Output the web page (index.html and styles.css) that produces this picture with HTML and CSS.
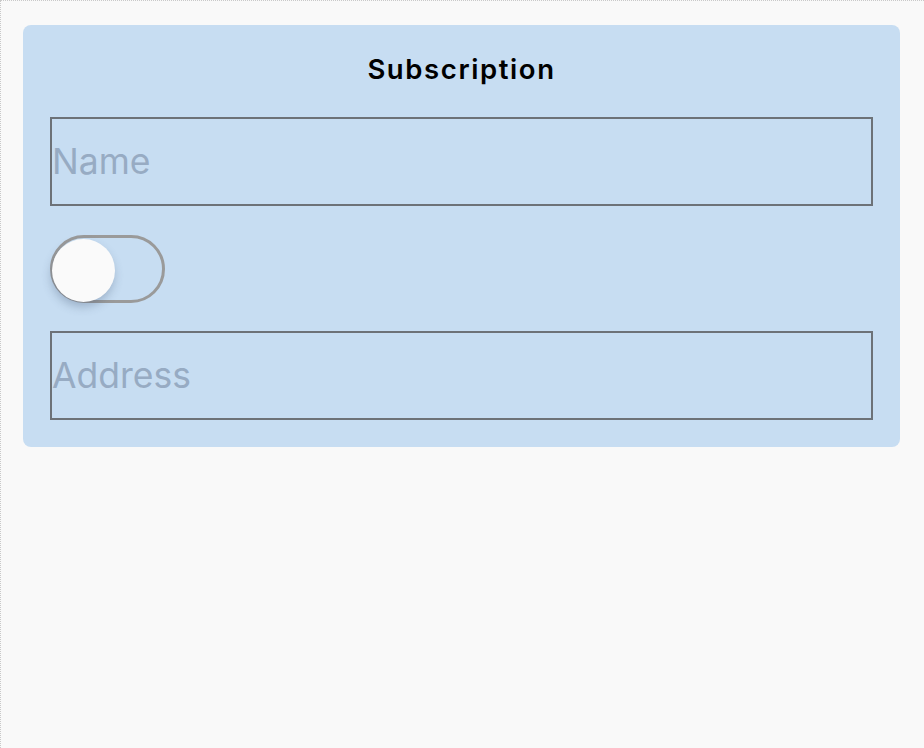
FILE: index.html
```html
<!DOCTYPE html>
<html lang="en">
<head>
    <meta charset="UTF-8">
    <meta name="viewport" content="width=device-width, initial-scale=1.0">
    <title>Subscription</title>
    <link rel="stylesheet" href="styles.css">
</head>
<body>
    <div class="page">
        <form class="card" id="subscriptionForm">
            <h2 class="card-title">Subscription</h2>
            <input class="field" type="text" id="name" placeholder="Name">
            <label class="switch">
                <input type="checkbox" id="subscribed">
                <span class="knob"></span>
            </label>
            <input class="field" type="text" id="address" placeholder="Address">
        </form>
    </div>
</body>
</html>
```

FILE: styles.css
```css
body {
    margin: 0;
    font-family: Inter, "Liberation Sans", Arial, sans-serif;
    background: #f9f9f9;
    min-height: 100vh;
    box-sizing: border-box;
    border-top: 1px dotted #c9c9c9;
    border-left: 1px dotted #c9c9c9;
}

.page {
    padding: 24px 24px 0 22px;
}

.card {
    background: #c7ddf2;
    border-radius: 8px;
    padding: 0 27px 27px;
    display: flex;
    flex-direction: column;
    align-items: flex-start;
}

.card-title {
    align-self: stretch;
    margin: 28px 0 32px;
    font-size: 27.5px;
    line-height: 32px;
    font-weight: 600;
    letter-spacing: 1.6px;
    text-align: center;
    color: #000;
}

.field {
    box-sizing: border-box;
    width: 100%;
    height: 89px;
    margin: 0;
    padding: 0;
    border: 2px solid #6d7278;
    background: transparent;
    font-family: inherit;
    font-size: 35.5px;
    color: #222;
    outline: none;
}

.field::placeholder {
    color: #97abc3;
}

.switch {
    position: relative;
    display: block;
    box-sizing: border-box;
    width: 115px;
    height: 68px;
    margin: 29px 0 28px;
    border: 3px solid #9a9a9a;
    border-radius: 34px;
    cursor: pointer;
}

.switch input {
    display: none;
}

.knob {
    position: absolute;
    left: -1px;
    top: 1px;
    width: 63px;
    height: 63px;
    border-radius: 50%;
    background: #fafafa;
    box-shadow: -1px 5px 10px rgba(60, 80, 110, 0.3);
    transition: left 0.2s ease;
}

.switch input:checked + .knob {
    left: 45px;
}
```
